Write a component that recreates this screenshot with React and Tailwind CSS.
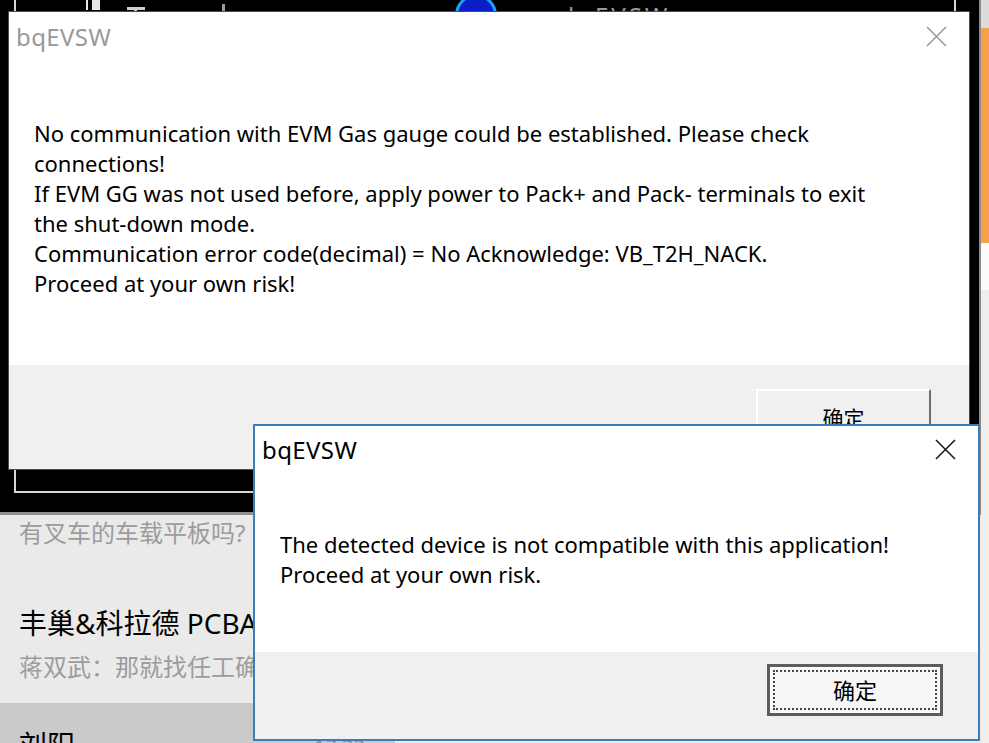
import React from "react";

const CloseIcon = ({ color }) => (
  <svg width="21" height="21" viewBox="0 0 21 21" fill="none">
    <path d="M1 1 L20 20 M20 1 L1 20" stroke={color} strokeWidth="1.6" />
  </svg>
);

const BackdropWindow = () => (
  <div className="absolute left-0 top-0 w-[979px] h-[512px] bg-black overflow-hidden">
    {/* inner frame of the window behind */}
    <div className="absolute left-[14px] top-[-10px] w-[942px] h-[503px] border-l-2 border-r-2 border-b-2 border-[#d6d6d6]" />
    <div className="absolute left-[86px] top-0 w-[14px] h-[10px] bg-[#e8e8e8]" />
    <div className="absolute left-[88px] top-0 w-[4px] h-[11px] bg-black" />
    <div className="absolute left-[127px] top-[7px] w-[18px] h-[3px] bg-[#d0d0d0]" />
    <div className="absolute left-[134px] top-[7px] w-[3px] h-[6px] bg-[#d0d0d0]" />
    <div className="absolute left-[222px] top-[4px] w-[3px] h-[8px] bg-[#9a9a9a]" />
    <div className="absolute left-[455px] top-[-6px] w-[42px] h-[42px] rounded-full bg-[#0a1fc8] border-[3px] border-[#1fa0ff]" />
    <div className="absolute left-[568px] top-[1px] text-[24px] leading-[30px] text-[#9a9a9a] font-['Noto_Sans',sans-serif] tracking-[3px] whitespace-nowrap">
      b EVSW
    </div>
  </div>
);

const RightStrip = () => (
  <div className="absolute left-[979px] top-0 w-[10px] h-[743px] flex">
    <div className="w-[2px] h-[515px] bg-[#8c8c8c]" />
    <div className="flex-1 flex flex-col">
      <div className="h-[28px] bg-[#dcdcdc]" />
      <div className="h-[215px] bg-[#f6a04a]" />
      <div className="h-[47px] bg-[#fbfbfb]" />
      <div className="flex-1 bg-[#eeeeee]" />
    </div>
  </div>
);

const ChatList = () => (
  <div className="absolute left-0 top-[512px] w-[979px] h-[231px] flex flex-col overflow-hidden font-['Noto_Sans','Noto_Sans_CJK_SC',sans-serif]">
    <div className="h-[3px] shrink-0 bg-[#8f8f8f]" />
    <div className="h-[188px] shrink-0 bg-[#eaeaea] pl-[19px]">
      <div className="text-[24px] leading-[36px] text-[#9c9c9c] whitespace-nowrap">
        有叉车的车载平板吗?
      </div>
      <div className="mt-[54px] text-[28px] leading-[36px] text-black whitespace-nowrap">
        丰巢&amp;科拉德 PCBA
      </div>
      <div className="mt-[8px] text-[24px] leading-[36px] text-[#9c9c9c] whitespace-nowrap">
        蒋双武：那就找任工确认
      </div>
    </div>
    <div className="h-[40px] shrink-0 flex">
      <div className="w-[395px] bg-[#cacaca] pl-[19px] pt-[24px] flex justify-between pr-[30px]">
        <span className="text-[28px] leading-[36px] text-black">刘阳</span>
        <span className="text-[20px] leading-[36px] text-[#8a8a8a] mt-[2px]">17:33</span>
      </div>
      <div className="flex-1 bg-[#ececec]" />
    </div>
  </div>
);

const FirstDialog = () => (
  <div className="absolute left-[8px] top-[11px] w-[962px] h-[459px] border border-[#4d4d4d] bg-white flex flex-col font-['Noto_Sans','Noto_Sans_CJK_SC',sans-serif]">
    <div className="flex-1">
      <div className="flex items-start justify-between pt-[10px] pl-[7px] pr-[22px]">
        <span className="text-[24px] leading-[30px] tracking-[0.4px] text-[#999999]">bqEVSW</span>
        <span className="mt-[4px]">
          <CloseIcon color="#9a9a9a" />
        </span>
      </div>
      <div className="mt-[66px] pl-[25px] text-[22px] leading-[30px] text-black whitespace-nowrap">
        <div>No communication with EVM Gas gauge could be established. Please check</div>
        <div>connections!</div>
        <div>If EVM GG was not used before, apply power to Pack+ and Pack- terminals to exit</div>
        <div>the shut-down mode.</div>
        <div>Communication error code(decimal) = No Acknowledge: VB_T2H_NACK.</div>
        <div>Proceed at your own risk!</div>
      </div>
    </div>
    <div className="h-[104px] shrink-0 bg-[#f0f0f0] flex justify-end pr-[38px] pt-[24px]">
      <div className="w-[175px] h-[58px] bg-[#f1f1f1] border-t-2 border-l-2 border-white border-r-2 border-b-2 border-r-[#6e6e6e] border-b-[#6e6e6e] flex items-center justify-center">
        <span className="text-[21px] leading-[28px] text-black">确定</span>
      </div>
    </div>
  </div>
);

const SecondDialog = () => (
  <div className="absolute left-[253px] top-[424px] w-[727px] h-[317px] border-2 border-[#3a7dbd] bg-white flex flex-col font-['Noto_Sans','Noto_Sans_CJK_SC',sans-serif]">
    <div className="flex-1">
      <div className="flex items-start justify-between pt-[9px] pl-[7px] pr-[22px]">
        <span className="text-[24px] leading-[30px] tracking-[0.4px] text-black">bqEVSW</span>
        <span className="mt-[4px]">
          <CloseIcon color="#1a1a1a" />
        </span>
      </div>
      <div className="mt-[64px] pl-[25px] text-[22px] leading-[30px] text-black whitespace-nowrap">
        <div>The detected device is not compatible with this application!</div>
        <div>Proceed at your own risk.</div>
      </div>
    </div>
    <div className="h-[87px] shrink-0 bg-[#f0f0f0] flex justify-end pr-[35px] pt-[12px]">
      <div className="w-[176px] h-[52px] border-[3px] border-[#5c5c5c] bg-white p-[1px]">
        <div className="w-full h-full bg-[#f7f7f7] p-[2px]">
          <div className="w-full h-full border-2 border-dotted border-[#444] flex items-center justify-center">
            <span className="text-[22px] leading-[28px] text-black">确定</span>
          </div>
        </div>
      </div>
    </div>
  </div>
);

export default function App() {
  return (
    <div className="relative w-[989px] h-[743px] overflow-hidden bg-[#eaeaea]">
      <BackdropWindow />
      <RightStrip />
      <ChatList />
      <FirstDialog />
      <SecondDialog />
    </div>
  );
}
